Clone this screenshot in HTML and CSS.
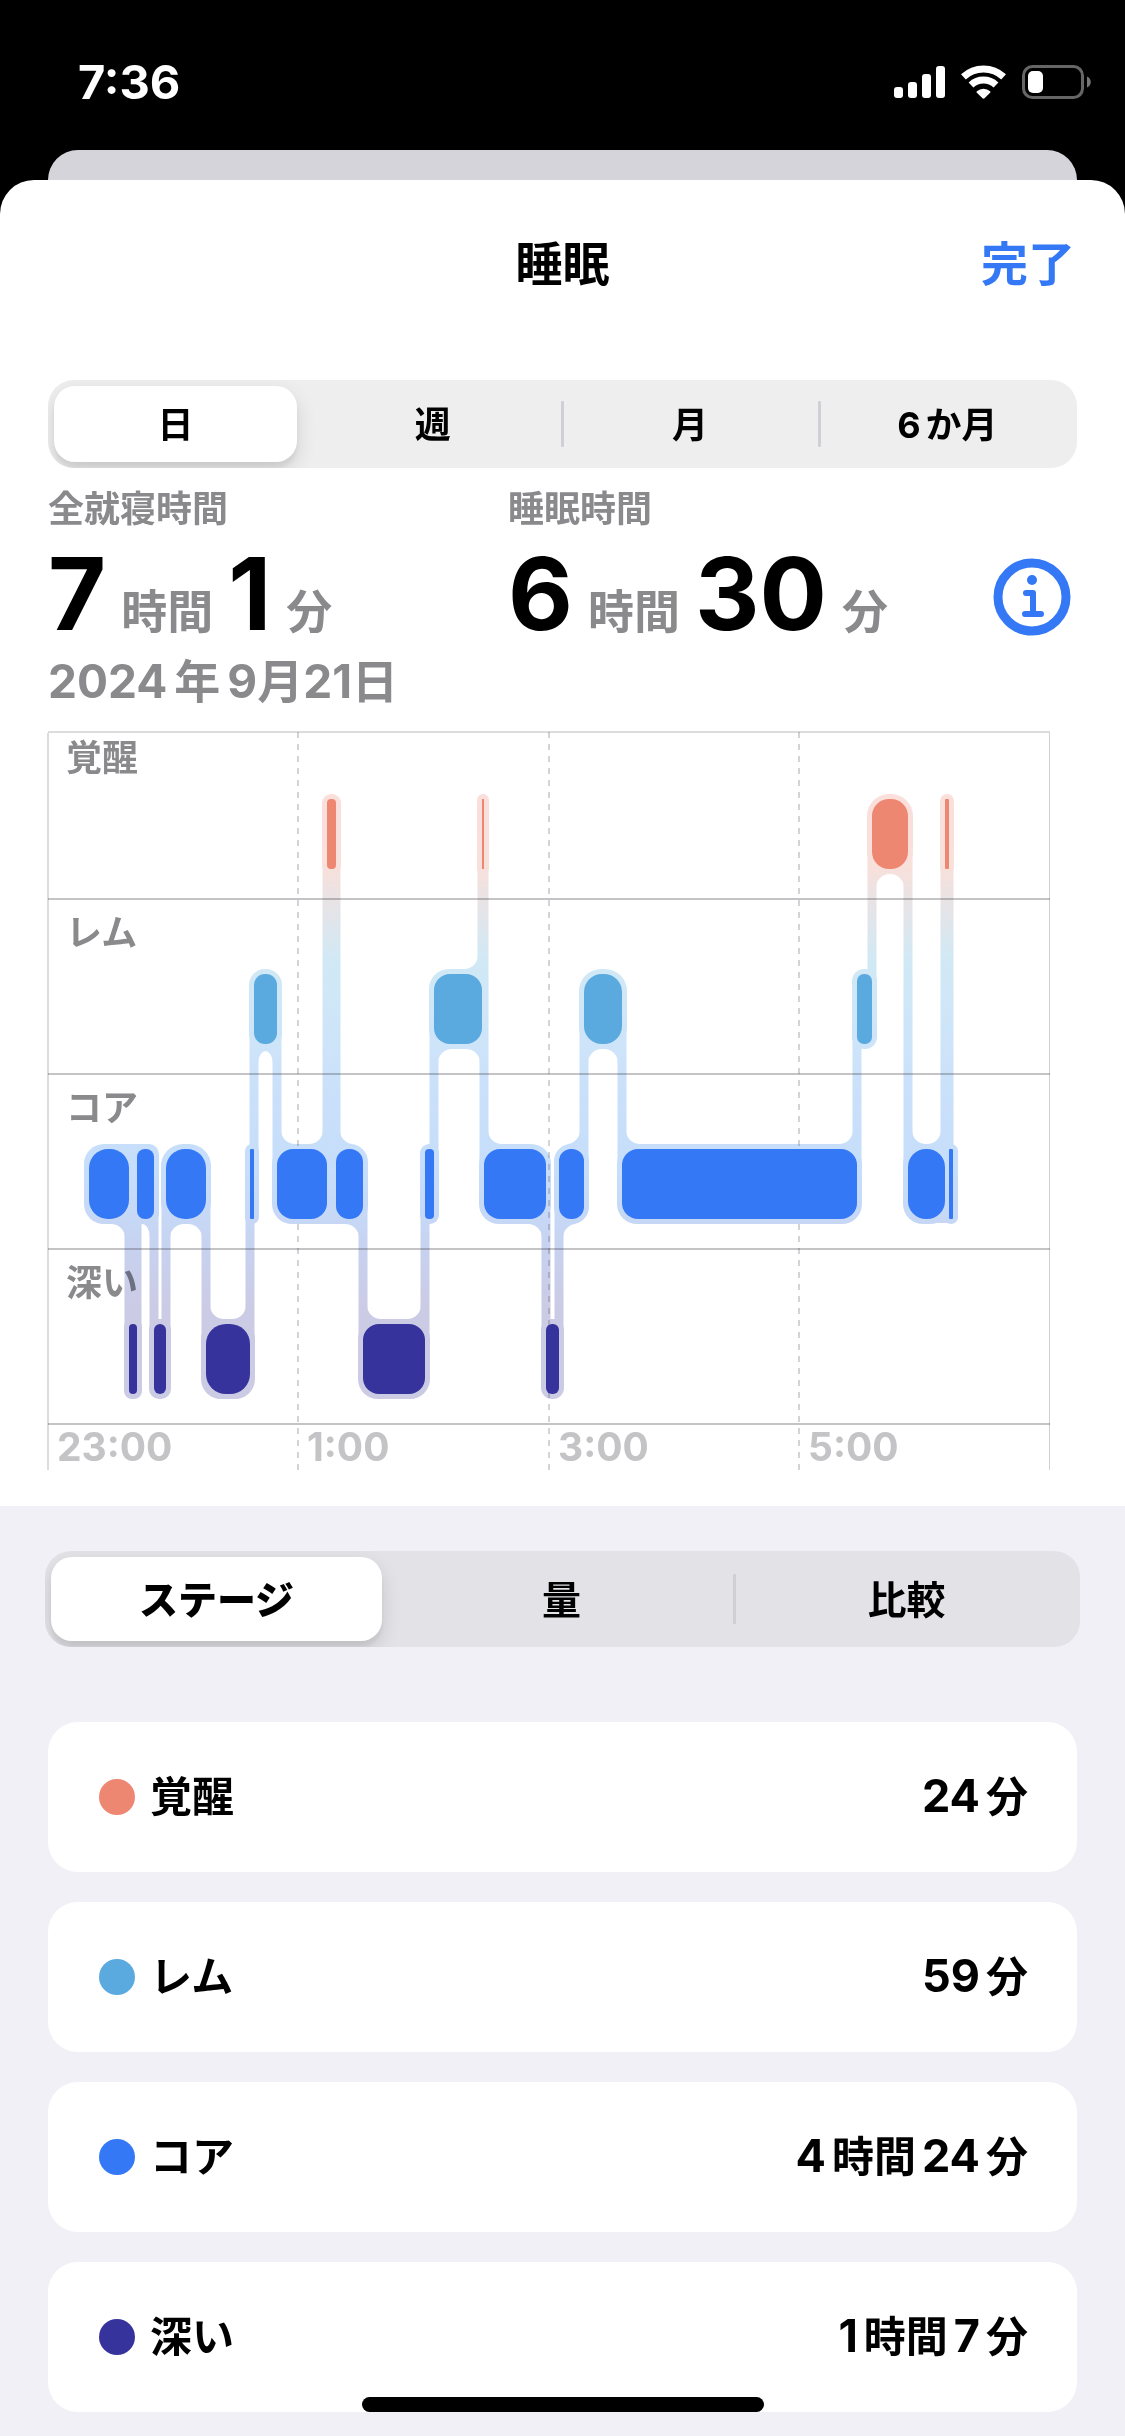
FILE: index.html
```html
<!DOCTYPE html>
<html lang="ja">
<head>
<meta charset="utf-8">
<meta name="viewport" content="width=device-width, initial-scale=1">
<title>睡眠</title>
<link rel="stylesheet" href="styles.css">
</head>
<body>
<div class="status-bar">
  <time class="clock">7:36</time>
  <div class="status-icons">
    <svg width="51" height="32" viewBox="0 0 51 32" fill="#fff" aria-hidden="true">
      <rect x="0" y="21" width="9" height="11" rx="3"/>
      <rect x="14" y="16" width="9" height="16" rx="3"/>
      <rect x="28" y="8" width="9" height="24" rx="3"/>
      <rect x="42" y="0" width="9" height="32" rx="3"/>
    </svg>
    <svg width="45" height="34" viewBox="0 0 45 34" aria-hidden="true">
      <g fill="none" stroke="#fff" stroke-width="7">
        <path d="M2.4 11.9a29.5 29.5 0 0 1 40.2 0"/>
        <path d="M10 20a18.3 18.3 0 0 1 25 0"/>
      </g>
      <path d="M15.9 26.2a9.8 9.8 0 0 1 13.2 0q.8.8 0 1.6l-5.6 5.4q-1 .9-2 0l-5.6-5.4q-.8-.8 0-1.6z" fill="#fff"/>
    </svg>
    <svg width="69" height="34" viewBox="0 0 69 34" aria-hidden="true">
      <rect x="1.5" y="1.5" width="59" height="31" rx="9" fill="none" stroke="#666" stroke-width="3"/>
      <rect x="6" y="6" width="15" height="22" rx="5" fill="#fff"/>
      <path d="M65 11.5c5 2 5 9 0 11z" fill="#777"/>
    </svg>
  </div>
</div>
<div class="back-sheet"></div>
<div class="sheet">
  <header class="nav">
    <h1 class="nav-title">睡眠</h1>
    <button class="nav-done" type="button">完了</button>
  </header>

  <div class="segmented period" role="radiogroup" aria-label="期間">
    <label class="segment"><input type="radio" name="period" checked><span class="face">日</span></label>
    <label class="segment"><input type="radio" name="period"><span class="face">週</span></label>
    <label class="segment"><input type="radio" name="period"><span class="face">月</span></label>
    <label class="segment"><input type="radio" name="period"><span class="face"><span><span class="before-kana">6</span>か月</span></span></label>
  </div>

  <section class="summary">
    <div class="stat">
      <h2 class="stat-label">全就寝時間</h2>
      <p class="stat-value">7<span class="unit">時間</span>1<span class="unit">分</span></p>
    </div>
    <div class="stat">
      <h2 class="stat-label">睡眠時間</h2>
      <p class="stat-value">6<span class="unit">時間</span>30<span class="unit">分</span></p>
    </div>
    <button class="info" type="button" aria-label="情報">
      <svg width="78" height="78" viewBox="0 0 78 78" fill="none" stroke="#3478f6" stroke-linecap="round" stroke-linejoin="round" aria-hidden="true">
        <circle cx="39" cy="39" r="34" stroke-width="9"/>
        <circle cx="39" cy="22" r="5" fill="#3478f6" stroke="none"/>
        <path d="M33 35h7v20M32 56h16" stroke-width="6"/>
      </svg>
    </button>
    <p class="date">2024<span class="spaced">年</span>9月21日</p>
  </section>

  <svg class="chart" viewBox="47 731 1003 739" role="img" aria-label="睡眠ステージ">
    <defs>
      <linearGradient id="stages" gradientUnits="userSpaceOnUse" x1="0" y1="794" x2="0" y2="1399">
        <stop offset="0" stop-color="#fadfdb"/>
        <stop offset=".12" stop-color="#f8e0db"/>
        <stop offset=".174" stop-color="#e9e3e5"/>
        <stop offset=".273" stop-color="#d1e9f5"/>
        <stop offset=".413" stop-color="#cde4f9"/>
        <stop offset=".52" stop-color="#c9dffa"/>
        <stop offset=".62" stop-color="#c6defb"/>
        <stop offset=".7" stop-color="#c6d8f6"/>
        <stop offset=".76" stop-color="#c7d1ee"/>
        <stop offset=".85" stop-color="#cccbe5"/>
        <stop offset="1" stop-color="#cccbe4"/>
      </linearGradient>
      <mask id="halo" maskUnits="userSpaceOnUse" x="47" y="731" width="1003" height="739">
        <g fill="#fff">
          <!-- awake -->
          <rect x="322" y="794" width="19" height="80" rx="9"/>
          <rect x="477" y="794" width="12" height="80" rx="6"/>
          <rect x="867" y="794" width="46" height="80" rx="22"/>
          <rect x="940" y="794" width="14" height="80" rx="7"/>
          <!-- REM -->
          <rect x="249" y="969" width="33" height="80" rx="16"/>
          <rect x="429" y="969" width="58" height="80" rx="20"/>
          <rect x="579" y="969" width="48" height="80" rx="22"/>
          <rect x="852" y="969" width="25" height="80" rx="12"/>
          <!-- core -->
          <rect x="84" y="1144" width="50" height="80" rx="20"/>
          <rect x="109" y="1144" width="37" height="80"/>
          <rect x="132" y="1144" width="27" height="80" rx="10"/>
          <rect x="161" y="1144" width="50" height="80" rx="22"/>
          <rect x="245" y="1144" width="14" height="80" rx="7"/>
          <rect x="272" y="1144" width="60" height="80" rx="20"/>
          <rect x="302" y="1144" width="46" height="80"/>
          <rect x="331" y="1144" width="37" height="80" rx="18"/>
          <rect x="420" y="1144" width="19" height="80" rx="9"/>
          <rect x="479" y="1144" width="72" height="80" rx="20"/>
          <rect x="554" y="1144" width="35" height="80" rx="17"/>
          <rect x="617" y="1144" width="245" height="80" rx="20"/>
          <rect x="903" y="1144" width="47" height="80" rx="20"/>
          <rect x="927" y="1144" width="22" height="79"/>
          <rect x="944" y="1144" width="14" height="80" rx="7"/>
          <!-- deep -->
          <rect x="124" y="1319" width="18" height="80" rx="8"/>
          <rect x="149" y="1319" width="22" height="80" rx="10"/>
          <rect x="201" y="1319" width="54" height="80" rx="20"/>
          <rect x="358" y="1319" width="72" height="80" rx="20"/>
          <rect x="541" y="1319" width="23" height="80" rx="11"/>
        </g>
        <!-- transitions between stages -->
        <path fill="none" stroke="#fff" stroke-width="9" d="M129 1180V1360M137 1180V1360M154 1180V1360M166 1180V1360M206 1180V1360M250 1180V1360M254 1010V1180M277 1010V1180M327 840V1180M336 840V1180M363 1180V1360M425 1180V1360M434 1010V1180M482 840V1010M484 840V1180M546 1180V1360M559 1180V1360M584 1010V1180M622 1010V1180M857 1010V1180M872 840V1010M908 840V1180M945 840V1180M949 840V1180"/>
        <!-- rounded inner corners -->
        <g fill="#fff">
          <path d="M125 1204v34a14 14 0 0 0-14-14v-20zM150 1204v34a8 14 0 0 0-8-14v-20zM202 1204v34a14 14 0 0 0-14-14v-20zM359 1204v34a14 14 0 0 0-14-14v-20zM542 1204v34a14 14 0 0 0-14-14v-20z"/>
          <path d="M170 1204v34a14 14 0 0 1 14-14v-20zM563 1204v34a14 14 0 0 1 12-14v-20z"/>
          <path d="M281 1164v-34a14 14 0 0 0 14 14v20zM340 1164v-34a14 14 0 0 0 12 14v20zM488 1164v-34a14 14 0 0 0 14 14v20zM626 1164v-34a14 14 0 0 0 14 14v20zM912 1164v-34a14 14 0 0 0 14 14v20z"/>
          <path d="M323 1164v-34a14 14 0 0 1-14 14v20zM580 1164v-34a14 14 0 0 1-12 14v20zM853 1164v-34a14 14 0 0 1-14 14v20zM941 1164v-34a14 14 0 0 1-14 14v20zM478 989v-34a14 14 0 0 1-14 14v20z"/>
          <path d="M258 1030v34a8 13 0 0 1 8-13v-21zM438 1029v34a14 14 0 0 1 14-14v-20zM588 1029v34a14 14 0 0 1 14-14v-20zM876 854v34a14 14 0 0 1 14-14v-20z"/>
          <path d="M273 1030v34a8 13 0 0 0-8-13v-21zM480 1029v34a14 14 0 0 0-14-14v-20zM618 1029v34a14 14 0 0 0-14-14v-20zM904 854v34a14 14 0 0 0-14-14v-20z"/>
          <path d="M210 1339v-34a14 14 0 0 0 14 14v20zM367 1339v-34a14 14 0 0 0 14 14v20zM246 1339v-34a14 14 0 0 1-14 14v20zM421 1339v-34a14 14 0 0 1-14 14v20z"/>
          <path d="M150 1319h20v20h-20zM542 1319h21v20h-21z"/>
        </g>
      </mask>
    </defs>

    <g class="stage-labels">
      <text x="66" y="771">覚醒</text>
      <text x="66" y="946">レム</text>
      <text x="66" y="1121">コア</text>
      <text x="66" y="1296">深い</text>
    </g>
    <rect class="halo" x="47" y="731" width="1003" height="739" fill="url(#stages)" mask="url(#halo)"/>

    <g class="grid">
      <path class="frame" d="M48 732H1050M48 733V1470"/>
      <path class="frame thin" d="M1049 732h1v738h-1z"/>
      <path class="rows" d="M48 899H1050M48 1074H1050M48 1249H1050M48 1424H1050"/>
      <path class="hours" d="M298 732V1470M549 732V1470M799 732V1470"/>
    </g>

    <g class="awake">
      <rect x="327" y="799" width="9" height="70" rx="4"/>
      <rect x="482" y="799" width="2" height="70"/>
      <rect x="872" y="799" width="36" height="70" rx="17"/>
      <rect x="945" y="799" width="4" height="70" rx="1"/>
    </g>
    <g class="rem">
      <rect x="254" y="974" width="23" height="70" rx="11"/>
      <rect x="434" y="974" width="48" height="70" rx="16"/>
      <rect x="584" y="974" width="38" height="70" rx="18"/>
      <rect x="857" y="974" width="15" height="70" rx="7"/>
    </g>
    <g class="core">
      <rect x="89" y="1149" width="40" height="70" rx="19"/>
      <rect x="137" y="1149" width="17" height="70" rx="8"/>
      <rect x="166" y="1149" width="40" height="70" rx="19"/>
      <rect x="250" y="1149" width="4" height="70" rx="1"/>
      <rect x="277" y="1149" width="50" height="70" rx="16"/>
      <rect x="336" y="1149" width="27" height="70" rx="13"/>
      <rect x="425" y="1149" width="9" height="70" rx="4"/>
      <rect x="484" y="1149" width="62" height="70" rx="16"/>
      <rect x="559" y="1149" width="25" height="70" rx="12"/>
      <rect x="622" y="1149" width="235" height="70" rx="16"/>
      <rect x="908" y="1149" width="37" height="70" rx="18"/>
      <rect x="949" y="1149" width="4" height="70" rx="1"/>
    </g>
    <g class="deep">
      <rect x="129" y="1324" width="8" height="70" rx="4"/>
      <rect x="154" y="1324" width="12" height="70" rx="6"/>
      <rect x="206" y="1324" width="44" height="70" rx="20"/>
      <rect x="363" y="1324" width="62" height="70" rx="16"/>
      <rect x="546" y="1324" width="13" height="70" rx="6"/>
    </g>

    <g class="hour-labels">
      <text x="57" y="1461">23:00</text>
      <text x="307" y="1461">1:00</text>
      <text x="558" y="1461">3:00</text>
      <text x="808" y="1461">5:00</text>
    </g>
  </svg>
</div>

<main class="details">
  <div class="segmented view" role="radiogroup" aria-label="表示">
    <label class="segment"><input type="radio" name="view" checked><span class="face">ステージ</span></label>
    <label class="segment"><input type="radio" name="view"><span class="face">量</span></label>
    <label class="segment"><input type="radio" name="view"><span class="face">比較</span></label>
  </div>
  <ul class="stage-list">
    <li class="stage-card"><span class="dot dot-awake"></span><span class="stage-name">覚醒</span><span class="duration"><b>24</b>分</span></li>
    <li class="stage-card"><span class="dot dot-rem"></span><span class="stage-name">レム</span><span class="duration"><b>59</b>分</span></li>
    <li class="stage-card"><span class="dot dot-core"></span><span class="stage-name">コア</span><span class="duration"><b>4</b>時間<b>24</b>分</span></li>
    <li class="stage-card"><span class="dot dot-deep"></span><span class="stage-name">深い</span><span class="duration"><b>1</b>時間<b>7</b>分</span></li>
  </ul>
</main>
<div class="home-indicator"></div>
</body>
</html>
```
FILE: styles.css
```css
* {
  box-sizing: border-box;
}

body {
  position: relative;
  margin: 0;
  background: #000;
  color: #000;
  font-family: Inter, "Noto Sans CJK JP", sans-serif;
  font-weight: 700;
}

h1, h2, p, ul {
  margin: 0;
  padding: 0;
}

button {
  border: 0;
  padding: 0;
  background: none;
  font: inherit;
  cursor: pointer;
}

/* Status bar */
.status-bar {
  display: flex;
  align-items: center;
  justify-content: space-between;
  padding: 54px 34px 40px 78px;
  color: #fff;
}

.clock {
  font-size: 47px;
  line-height: 56px;
}

.status-icons {
  display: flex;
  align-items: center;
  gap: 16px;
}

/* Sheets */
.back-sheet {
  height: 60px;
  margin: 0 48px -30px;
  border-radius: 30px 30px 0 0;
  background: #d5d4da;
}

.sheet {
  position: relative;
  padding-bottom: 36px;
  border-radius: 34px 34px 0 0;
  background: #fff;
}

.nav {
  display: grid;
  grid-template-columns: 1fr auto 1fr;
  align-items: center;
  padding: 48px 50px 80px;
  font-size: 47px;
  line-height: 72px;
}

.nav-title {
  grid-column: 2;
  font-size: inherit;
}

.nav-done {
  justify-self: end;
  color: #3478f6;
}

/* Segmented controls */
.segmented {
  display: flex;
  overflow: hidden;
  border-radius: 26px;
}

.period {
  height: 88px;
  margin: 0 48px;
  background: #eee;
  font-size: 36px;
}

.view {
  height: 96px;
  background: #e2e2e7;
  font-size: 39px;
}

.segment {
  position: relative;
  display: flex;
  flex: 1;
  padding: 6px 8px 6px 6px;
}

.segment input {
  position: absolute;
  opacity: 0;
}

.face {
  display: flex;
  flex: 1;
  align-items: center;
  justify-content: center;
  padding-bottom: 4px;
  border-radius: 21px;
}

:checked + .face {
  background: #fff;
  box-shadow: 0 8px 20px rgb(0 0 0 / 12%), 0 6px 4px rgb(0 0 0 / 5%);
}

.view :checked + .face {
  font-weight: 900;
}

.segment:nth-child(n + 3)::before {
  content: "";
  position: absolute;
  left: -2px;
  top: 24%;
  width: 3px;
  height: 52%;
  border-radius: 1px;
  background: #d0d0d4;
}

.before-kana {
  margin-right: 5px;
}

/* Summary */
.summary {
  display: grid;
  grid-template-columns: 460px 1fr auto;
  padding: 18px 54px 25px 48px;
}

.stat-label {
  color: #8a8a8d;
  font-size: 36px;
  line-height: 46px;
}

.stat-value {
  font-size: 100px;
  line-height: 124px;
  white-space: nowrap;
}

.unit {
  margin: 0 15px;
  color: #8a8a8d;
  font-size: 46px;
  line-height: 1;
  vertical-align: 2px;
}

.info {
  align-self: end;
  width: 78px;
  height: 78px;
  margin-bottom: 20px;
}

.info svg {
  display: block;
}

.date {
  grid-column: 1 / -1;
  color: #8a8a8d;
  font-size: 46px;
  line-height: 50px;
}

.spaced {
  margin: 0 7px;
}

/* Chart */
.chart {
  display: block;
  width: calc(100% - 122px);
  margin: 0 75px 0 47px;
}

.stage-labels {
  fill: #8a8a8d;
  font-size: 36px;
}

.hour-labels {
  fill: #c4c4c6;
  font-size: 39px;
}

.halo {
  mix-blend-mode: multiply;
}

.grid path {
  fill: none;
  stroke: #3c3c43;
  stroke-opacity: .3;
  stroke-width: 2;
}

.grid .frame {
  stroke-opacity: .18;
}

.grid .thin {
  fill: #d1d1d3;
  stroke: none;
}

.grid .hours {
  stroke-dasharray: 6 6;
  stroke-opacity: .22;
}

.awake {
  fill: #ee8772;
}

.rem {
  fill: #5aaae0;
}

.core {
  fill: #3478f6;
}

.deep {
  fill: #36349c;
}

/* Details */
.details {
  padding: 45px 45px 24px;
  background: #f1f0f6;
}

.stage-list {
  display: grid;
  gap: 30px;
  margin: 75px 3px 0;
  list-style: none;
}

.stage-card {
  display: flex;
  align-items: center;
  min-height: 150px;
  padding: 0 49px 0 51px;
  border-radius: 30px;
  background: #fff;
  font-size: 42px;
  line-height: 60px;
}

.dot {
  width: 36px;
  height: 36px;
  margin-right: 15px;
  border-radius: 50%;
}

.dot-awake {
  background: #ee8772;
}

.dot-rem {
  background: #5aaae0;
}

.dot-core {
  background: #3478f6;
}

.dot-deep {
  background: #36349c;
}

.duration {
  margin-left: auto;
}

.duration b {
  margin: 0 6px;
  font-size: 45px;
  font-weight: 700;
  line-height: 1;
}

.home-indicator {
  position: absolute;
  bottom: 24px;
  left: 50%;
  width: 402px;
  height: 15px;
  margin-left: -201px;
  border-radius: 8px;
  background: #000;
}
```
